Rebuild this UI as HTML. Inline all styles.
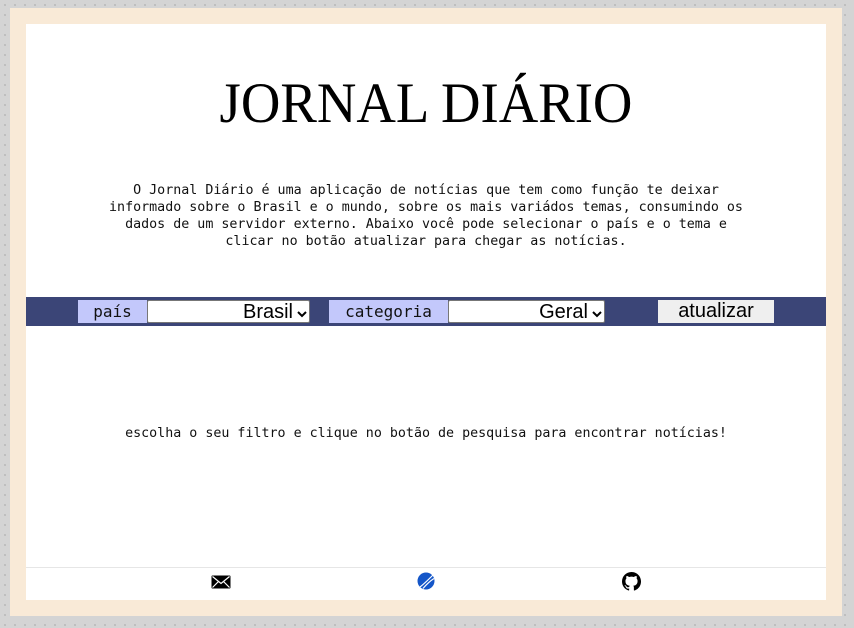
<!DOCTYPE html>
<html><head><meta charset="utf-8"><style>
html,body{margin:0;padding:0}
body{width:854px;height:628px;overflow:hidden;position:relative;background-color:#d4d4d4;background-image:radial-gradient(#bdbdbd 1px,transparent 1.2px);background-size:10px 10px;background-position:0 0;font-family:"DejaVu Sans Mono","Liberation Mono",monospace}
.frame{position:absolute;left:10px;top:8px;width:832px;height:608px;background:#f9ead7}
.page{position:absolute;left:26px;top:24px;width:800px;height:576px;background:#fff}
h1{position:absolute;left:0;width:800px;top:45px;margin:0;text-align:center;font-family:"Liberation Serif",serif;font-weight:normal;font-size:57px;line-height:70px;color:#000;transform:scaleX(0.96);}
.desc{position:absolute;left:80px;width:640px;top:158px;text-align:center;font-size:13.33px;line-height:17px;color:#111}
.bar{position:absolute;left:0;top:273px;width:800px;height:29px;background:#3b4577}
.lbl{position:absolute;top:3px;height:23px;background:#c3c8fb;font-size:16px;line-height:24px;text-align:center;color:#111}
.sel{position:absolute;top:3px;height:21px;background:#fff;border:1px solid #777;box-sizing:content-box;font-family:"Liberation Sans",sans-serif;font-size:20px;line-height:22px;text-align:right;color:#000;border-radius:2px}
.sel span{margin-right:4px}
.btn{position:absolute;left:632px;top:3px;width:116px;height:23px;background:#efefef;font-family:"Liberation Sans",sans-serif;font-size:20px;line-height:22px;text-align:center;color:#000}
.msg{position:absolute;left:0;width:800px;top:401px;text-align:center;font-size:13.33px;line-height:17px;color:#111}
.line{position:absolute;left:0;top:543px;width:800px;height:1px;background:#e6e6e6}
.ic{position:absolute;top:548px}
</style></head><body>
<div class="frame"></div>
<div class="page">
<h1>JORNAL DIÁRIO</h1>
<div class="desc">O Jornal Diário é uma aplicação de notícias que tem como função te deixar informado sobre o Brasil e o mundo, sobre os mais variádos temas, consumindo os dados de um servidor externo. Abaixo você pode selecionar o país e o tema e clicar no botão atualizar para chegar as notícias.</div>
<div class="bar">
<div class="lbl" style="left:52px;width:69px">país</div>
<div class="sel" style="left:121px;width:161px"><span>Brasil</span><svg width="10" height="8" viewBox="0 0 10 8" style="margin-right:2px"><path d="M1 2l4 4 4-4" fill="none" stroke="#000" stroke-width="2"/></svg></div>
<div class="lbl" style="left:303px;width:119px">categoria</div>
<div class="sel" style="left:422px;width:155px"><span>Geral</span><svg width="10" height="8" viewBox="0 0 10 8" style="margin-right:2px"><path d="M1 2l4 4 4-4" fill="none" stroke="#000" stroke-width="2"/></svg></div>
<div class="btn">atualizar</div>
</div>
<div class="msg">escolha o seu filtro e clique no botão de pesquisa para encontrar notícias!</div>
<div class="line"></div>
<svg class="ic" style="left:185px;top:550px" width="20" height="16" viewBox="0 0 20 16"><rect x="0.5" y="1.5" width="19" height="13" rx="1" fill="#000"/><path d="M1.5 2.5l8.5 7 8.5-7M1.5 13.5l6-6M18.5 13.5l-6-6" stroke="#fff" stroke-width="1.2" fill="none"/></svg>
<svg class="ic" style="left:391px;top:548px" width="18" height="18" viewBox="0 0 18 18"><circle cx="9" cy="9" r="8.5" fill="#1456c8"/><path d="M3 15C7 12 12 7 16 3M6 16.5C9 13 13 9 17 6.5" stroke="#fff" stroke-width="1.2" fill="none"/></svg>
<svg class="ic" style="left:596px;top:548px" width="19" height="19" viewBox="0 0 16 16"><path fill="#000" d="M8 0C3.580 0 0 3.580 0 8c0 3.540 2.290 6.530 5.470 7.590.4.07.55-.17.55-.38v-1.330c-2.230.48-2.700-1.070-2.700-1.070-.36-.92-.89-1.170-.89-1.170-.73-.5.05-.49.05-.49.8.06 1.230.83 1.230.83.71 1.220 1.870.87 2.330.66.07-.52.28-.87.51-1.070-1.780-.2-3.640-.89-3.640-3.950 0-.87.31-1.590.82-2.150-.08-.2-.36-1.020.08-2.120 0 0 .67-.21 2.200.82.64-.18 1.320-.27 2-.27.68 0 1.360.09 2 .27 1.530-1.040 2.200-.82 2.200-.82.44 1.100.16 1.920.08 2.120.51.56.82 1.270.82 2.150 0 3.070-1.870 3.750-3.650 3.950.29.25.54.73.54 1.480v2.200c0 .21.15.46.55.38A8.013 8.013 0 0016 8c0-4.420-3.580-8-8-8z"/></svg>
</div>
</body></html>
